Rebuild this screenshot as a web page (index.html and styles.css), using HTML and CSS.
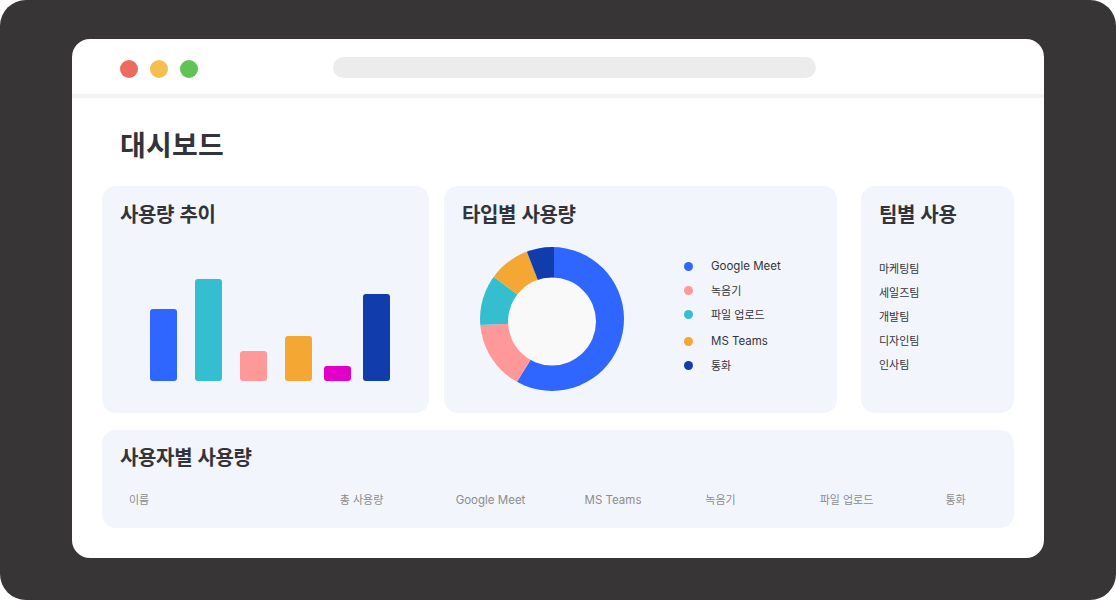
FILE: index.html
```html
<!DOCTYPE html>
<html lang="ko">
<head>
<meta charset="utf-8">
<title>대시보드</title>
<link rel="stylesheet" href="styles.css">
</head>
<body>
<div class="frame">
  <div class="window">
    <header class="chrome">
      <div class="dots">
        <span class="dot dot-red"></span>
        <span class="dot dot-yellow"></span>
        <span class="dot dot-green"></span>
      </div>
      <div class="urlbar"></div>
    </header>
    <main class="content">
      <h1 class="page-title">대시보드</h1>
      <section class="row">
        <article class="card card-trend">
          <h2 class="card-title">사용량 추이</h2>
          <div class="bars">
            <span class="bar bar-blue"></span>
            <span class="bar bar-teal"></span>
            <span class="bar bar-pink"></span>
            <div class="bar-group">
              <span class="bar bar-orange"></span>
              <span class="bar bar-magenta"></span>
              <span class="bar bar-navy"></span>
            </div>
          </div>
        </article>
        <article class="card card-type">
          <h2 class="card-title">타입별 사용량</h2>
          <div class="type-body">
            <svg class="donut" width="144" height="144" viewBox="0 0 144 144" aria-hidden="true">
              <defs>
                <clipPath id="ring"><circle cx="72" cy="72" r="72"/></clipPath>
              </defs>
              <g clip-path="url(#ring)">
                <polygon fill="#2f66ff" points="74,75 74,-20 200,-20 200,200 0,194.4"/>
                <polygon fill="#ff9999" points="74,75 0,194.4 -74,194.4 -74,81"/>
                <polygon fill="#35bdd0" points="74,75 -74,81 -74,-15 -46,-15"/>
                <polygon fill="#f5a733" points="74,75 -46,-15 -46,-65 20,-65"/>
                <polygon fill="#113cab" points="74,75 20,-65 74,-65"/>
              </g>
              <circle cx="72" cy="74.5" r="44" fill="#f9f9f9"/>
            </svg>
            <ul class="legend">
              <li class="legend-item"><span class="swatch bar-blue"></span><span class="latin">Google Meet</span></li>
              <li class="legend-item"><span class="swatch bar-pink"></span><span class="hangul">녹음기</span></li>
              <li class="legend-item legend-item-wide"><span class="swatch bar-teal"></span><span class="hangul">파일 업로드</span></li>
              <li class="legend-item"><span class="swatch bar-orange"></span><span class="latin">MS Teams</span></li>
              <li class="legend-item"><span class="swatch bar-navy"></span><span class="hangul">통화</span></li>
            </ul>
          </div>
        </article>
        <article class="card card-team">
          <h2 class="card-title">팀별 사용</h2>
          <ul class="team-list">
            <li class="hangul">마케팅팀</li>
            <li class="hangul">세일즈팀</li>
            <li class="hangul">개발팀</li>
            <li class="hangul">디자인팀</li>
            <li class="hangul">인사팀</li>
          </ul>
        </article>
      </section>
      <section class="card card-users">
        <h2 class="card-title">사용자별 사용량</h2>
        <div class="table-head">
          <span class="col-name hangul">이름</span>
          <span class="hangul">총 사용량</span>
          <span class="latin">Google Meet</span>
          <span class="latin">MS Teams</span>
          <span class="hangul">녹음기</span>
          <span class="hangul">파일 업로드</span>
          <span class="hangul">통화</span>
        </div>
      </section>
    </main>
  </div>
</div>
</body>
</html>
```

FILE: styles.css
```css
* { box-sizing: border-box; }
html, body { margin: 0; padding: 0; background: #fff; }
body {
  width: 1116px;
  height: 600px;
  overflow: hidden;
  font-family: Inter, "Noto Sans CJK KR", sans-serif;
  color: #32343a;
}
.frame {
  width: 1116px;
  height: 600px;
  padding: 39px 72px 42px;
  background: #373535;
  border-radius: 26px;
}
.window {
  height: 519px;
  background: #fff;
  border-radius: 18px;
  overflow: hidden;
}
.chrome {
  height: 59px;
  padding: 18px 0 0 48px;
  display: flex;
  align-items: flex-start;
  border-bottom: 4px solid #f3f3f3;
}
.dots { display: flex; gap: 12px; padding-top: 3px; }
.dot { width: 18px; height: 18px; border-radius: 50%; }
.dot-red { background: #ec6a5e; }
.dot-yellow { background: #f4bf4f; }
.dot-green { background: #5fc454; }
.urlbar {
  width: 483px;
  height: 21px;
  margin-left: 135px;
  background: #ececec;
  border-radius: 11px;
}
.content { padding: 0 30px; }
.page-title {
  margin: 0;
  height: 88px;
  padding: 26px 0 0 18px;
  font: 700 28px/40px "Noto Sans CJK KR", sans-serif;
  letter-spacing: 0.2px;
  color: #32343a;
}
.row { display: flex; height: 227px; margin-bottom: 17px; }
.card {
  background: #f2f6fc;
  border-radius: 14px;
  padding: 13px 18px 0;
}
.card-title {
  margin: 0;
  font: 700 20px/29px "Noto Sans CJK KR", sans-serif;
  letter-spacing: -0.35px;
  color: #32343a;
}
.card-trend { width: 327px; }
.card-type { width: 393px; margin-left: 15px; }
.card-team { width: 153px; margin-left: 24px; }
.bars {
  display: flex;
  align-items: flex-end;
  gap: 18px;
  height: 153px;
  padding-left: 30px;
}
.bar-group { display: flex; align-items: flex-end; gap: 12px; }
.bar { display: block; width: 27px; border-radius: 3px; }
.bar-blue { background: #2f66ff; }
.bar-teal { background: #35bdd0; }
.bar-pink { background: #ff9999; }
.bar-orange { background: #f5a733; }
.bar-magenta { background: #e000c8; }
.bar-navy { background: #113cab; }
.bars > .bar-blue { height: 72px; }
.bars > .bar-teal { height: 102px; }
.bars > .bar-pink { height: 30px; }
.bar-group > .bar-orange { height: 45px; }
.bar-group > .bar-magenta { height: 15px; }
.bar-group > .bar-navy { height: 87px; }
.type-body { display: flex; padding-top: 19px; }
.donut { display: block; flex: none; margin-left: 18px; }
.legend {
  list-style: none;
  margin: 0 0 0 60px;
  padding: 7px 0 0;
}
.legend-item {
  display: flex;
  align-items: center;
  height: 24px;
}
.legend-item-wide { height: 27px; padding-bottom: 3px; }
.swatch {
  width: 9px;
  height: 9px;
  border-radius: 50%;
  margin-right: 18px;
}
.hangul { font-size: 11px; }
.latin { font-size: 11.5px; }
.team-list {
  list-style: none;
  margin: 0;
  padding: 29px 0 0;
}
.team-list li { height: 24px; line-height: 24px; }
.card-users { height: 98px; padding-top: 12px; }
.table-head {
  display: grid;
  grid-template-columns: 185px 113px 145px 100px 115px 137px 81px;
  margin-top: 17px;
  line-height: 24px;
  color: #8c8c8c;
  text-align: center;
}
.col-name { text-align: left; padding-left: 9px; }
```
